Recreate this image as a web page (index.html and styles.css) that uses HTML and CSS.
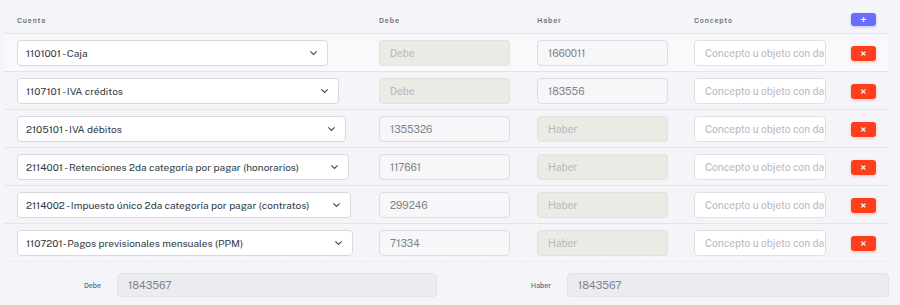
FILE: index.html
```html
<!DOCTYPE html>
<html lang="es">
<head>
<meta charset="utf-8">
<link rel="stylesheet" href="styles.css">
</head>
<body>
<div class="wrap">
  <div class="grid head">
    <div class="cell"><span class="th">Cuenta</span></div>
    <div class="cell"><span class="th">Debe</span></div>
    <div class="cell"><span class="th">Haber</span></div>
    <div class="cell"><span class="th">Concepto</span></div>
    <div class="cell"><button class="btn add">+</button></div>
  </div>

  <div class="grid row hover">
    <div class="cell"><div class="select" style="width:311px"><span>1101001 - Caja</span><svg class="chev" viewBox="0 0 10 6"><path d="M1.5 1.2 5 4.6 8.5 1.2"/></svg></div></div>
    <div class="cell"><div class="input dis ph">Debe</div></div>
    <div class="cell"><div class="input val">1660011</div></div>
    <div class="cell"><div class="input txt ph">Concepto u objeto con datos</div></div>
    <div class="cell"><button class="btn del">×</button></div>
  </div>

  <div class="grid row">
    <div class="cell"><div class="select" style="width:322px"><span>1107101 - IVA créditos</span><svg class="chev" viewBox="0 0 10 6"><path d="M1.5 1.2 5 4.6 8.5 1.2"/></svg></div></div>
    <div class="cell"><div class="input dis ph">Debe</div></div>
    <div class="cell"><div class="input val">183556</div></div>
    <div class="cell"><div class="input txt ph">Concepto u objeto con datos</div></div>
    <div class="cell"><button class="btn del">×</button></div>
  </div>

  <div class="grid row">
    <div class="cell"><div class="select" style="width:329px"><span>2105101 - IVA débitos</span><svg class="chev" viewBox="0 0 10 6"><path d="M1.5 1.2 5 4.6 8.5 1.2"/></svg></div></div>
    <div class="cell"><div class="input val">1355326</div></div>
    <div class="cell"><div class="input dis ph">Haber</div></div>
    <div class="cell"><div class="input txt ph">Concepto u objeto con datos</div></div>
    <div class="cell"><button class="btn del">×</button></div>
  </div>

  <div class="grid row">
    <div class="cell"><div class="select" style="width:332px"><span>2114001 - Retenciones 2da categoría por pagar (honorarios)</span><svg class="chev" viewBox="0 0 10 6"><path d="M1.5 1.2 5 4.6 8.5 1.2"/></svg></div></div>
    <div class="cell"><div class="input val">117661</div></div>
    <div class="cell"><div class="input dis ph">Haber</div></div>
    <div class="cell"><div class="input txt ph">Concepto u objeto con datos</div></div>
    <div class="cell"><button class="btn del">×</button></div>
  </div>

  <div class="grid row">
    <div class="cell"><div class="select" style="width:334px"><span>2114002 - Impuesto único 2da categoría por pagar (contratos)</span><svg class="chev" viewBox="0 0 10 6"><path d="M1.5 1.2 5 4.6 8.5 1.2"/></svg></div></div>
    <div class="cell"><div class="input val">299246</div></div>
    <div class="cell"><div class="input dis ph">Haber</div></div>
    <div class="cell"><div class="input txt ph">Concepto u objeto con datos</div></div>
    <div class="cell"><button class="btn del">×</button></div>
  </div>

  <div class="grid row last">
    <div class="cell"><div class="select" style="width:336px"><span>1107201- Pagos previsionales mensuales (PPM)</span><svg class="chev" viewBox="0 0 10 6"><path d="M1.5 1.2 5 4.6 8.5 1.2"/></svg></div></div>
    <div class="cell"><div class="input val">71334</div></div>
    <div class="cell"><div class="input dis ph">Haber</div></div>
    <div class="cell"><div class="input txt ph">Concepto u objeto con datos</div></div>
    <div class="cell"><button class="btn del">×</button></div>
  </div>

  <div class="totals">
    <label class="tl">Debe</label>
    <div class="input tot">1843567</div>
    <label class="tl">Haber</label>
    <div class="input tot">1843567</div>
  </div>
</div>
</body>
</html>
```

FILE: styles.css
```css
html, body {
  margin: 0;
  padding: 0;
  background: #f5f5f9;
  font-family: "Public Sans", Inter, "Noto Sans", "Liberation Sans", sans-serif;
  color: #384551;
}
.wrap {
  padding: 0 11px 0 4px;
  width: 885px;
}
.grid {
  display: grid;
  grid-template-columns: 362px 158px 157px 157px 51px;
  align-items: center;
}
.cell {
  padding-left: 13px;
  display: flex;
  align-items: center;
  min-width: 0;
}
.head {
  height: 26px;
  padding-top: 7px;
  border-bottom: 1px solid #e3e4e9;
}
.th {
  font-size: 7px;
  font-weight: 600;
  letter-spacing: 0.9px;
  color: #646e78;
}
.row {
  height: 37px;
  border-bottom: 1px solid #e3e4e9;
}
.row.hover {
  background: #f9f9fb;
}
.row.last {
  border-bottom: 1px dashed #e7e8ec;
}
.select {
  box-sizing: border-box;
  height: 26px;
  background: #fff;
  border: 1px solid #d9dadf;
  border-radius: 4px;
  display: flex;
  align-items: center;
  justify-content: space-between;
  padding: 0 9px 0 8px;
  font-size: 10.1px;
  color: #2f3a45;
  white-space: nowrap;
}
.chev {
  width: 9px;
  height: 6px;
  fill: none;
  stroke: #434c56;
  stroke-width: 1.3;
}
.input {
  box-sizing: border-box;
  height: 26px;
  width: 131px;
  border: 1px solid #dcdde2;
  border-radius: 4px;
  display: flex;
  align-items: center;
  padding: 0 10px;
  font-size: 10.2px;
  white-space: nowrap;
  overflow: hidden;
}
.input.dis {
  background: #ebeae4;
  border-color: #e2e1dc;
}
.input.val {
  background: #f7f7fa;
  color: #7e838a;
}
.input.txt {
  background: #fff;
  border-color: #dfe0e4;
  width: 132px;
  padding-right: 6px;
}
.ph {
  color: #b5b8bd;
}
.btn {
  width: 25px;
  border: none;
  border-radius: 3px;
  color: #fff;
  padding: 0;
  font-family: inherit;
  display: flex;
  align-items: center;
  justify-content: center;
}
.add {
  height: 13px;
  background: #696cff;
  font-size: 11px;
  font-weight: 600;
  box-shadow: 0 1px 3px rgba(105, 108, 255, 0.35);
  margin-top: -0.5px;
}
.del {
  height: 15px;
  background: #ff3e1d;
  font-size: 10px;
  font-weight: 700;
  box-shadow: 0 1px 3px rgba(255, 62, 29, 0.35);
  margin-top: 1px;
}
.totals {
  display: grid;
  grid-template-columns: 113px 320px 130px 322px;
  align-items: center;
  padding-top: 11px;
}
.tl {
  text-align: right;
  font-size: 7px;
  font-weight: 500;
  color: #566a7f;
  padding-right: 16px;
}
.input.tot {
  width: auto;
  height: 24px;
  background: #ebecef;
  border-color: #e3e4e8;
  color: #7e838a;
  font-size: 10.5px;
  padding: 0 10px;
}
```
